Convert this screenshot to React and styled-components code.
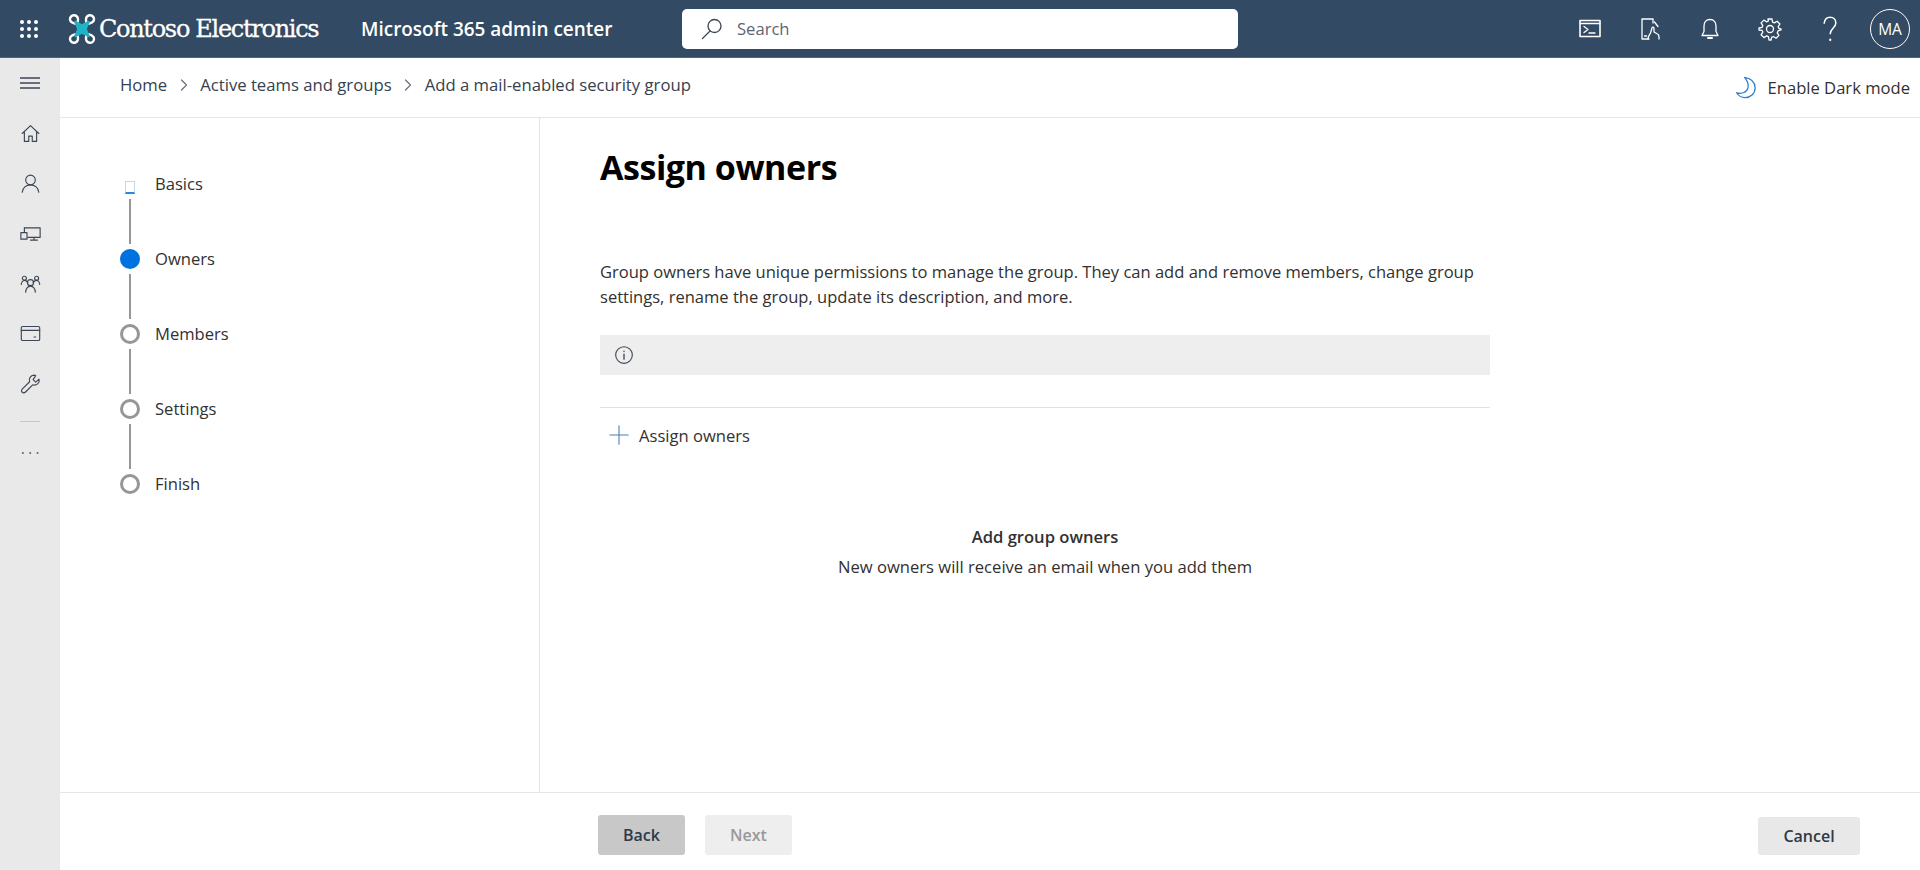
import React from 'react';
import styled, { createGlobalStyle } from 'styled-components';

const GlobalStyle = createGlobalStyle`
    html, body {
        margin: 0;
        padding: 0;
        height: 100%;
        background: #fff;
        font-family: "Open Sans", "Liberation Sans", sans-serif;
        color: #323130;
    }
    * { box-sizing: border-box; }
`;

const Page = styled.div`
    display: flex;
    flex-direction: column;
    height: 100vh;
    overflow: hidden;
`;

const TopBar = styled.header`
    display: flex;
    align-items: center;
    flex: 0 0 58px;
    background: #324a63;
    border-bottom: 1px solid #4f677c;
`;

const Waffle = styled.div`
    display: grid;
    grid-template-columns: repeat(3, 4px);
    grid-gap: 3px;
    margin-left: 20px;
    span {
        width: 4px;
        height: 4px;
        border-radius: 50%;
        background: #fff;
    }
`;

const Brand = styled.div`
    display: flex;
    align-items: center;
    margin-left: 30px;
    width: 293px;
    color: #fff;
    font-family: "DejaVu Serif", serif;
    font-size: 24px;
    letter-spacing: -1.3px;
    white-space: nowrap;
    -webkit-text-stroke: 0.3px #fff;
    svg { margin-right: 3px; }
`;

const AppName = styled.div`
    width: 321px;
    color: #fff;
    font-size: 18.95px;
    font-weight: 600;
    white-space: nowrap;
`;

const SearchBox = styled.div`
    display: flex;
    align-items: center;
    width: 556px;
    height: 40px;
    padding-left: 18px;
    background: #fff;
    border-radius: 5px;
    color: #5b6675;
    font-size: 16.6px;
    svg { margin-right: 13px; }
`;

const TopActions = styled.div`
    display: flex;
    align-items: center;
    margin-left: auto;
`;

const TopAction = styled.div`
    display: flex;
    align-items: center;
    justify-content: center;
    width: 60px;
    height: 57px;
    color: #fff;
`;

const Avatar = styled.div`
    display: flex;
    align-items: center;
    justify-content: center;
    width: 40px;
    height: 40px;
    border: 1px solid #fff;
    border-radius: 50%;
    color: #fff;
    font-size: 15.5px;
`;

const Body = styled.div`
    display: flex;
    flex: 1;
    min-height: 0;
`;

const SideNav = styled.nav`
    display: flex;
    flex-direction: column;
    align-items: center;
    flex: 0 0 60px;
    background: #e9e9e9;
    color: #3c4654;
`;

const NavItem = styled.div`
    display: flex;
    align-items: center;
    justify-content: center;
    width: 60px;
    height: 50px;
`;

const NavRule = styled.div`
    width: 20px;
    height: 1px;
    margin: 13px 0 6px;
    background: #c8c8c8;
`;

const Main = styled.main`
    display: flex;
    flex-direction: column;
    flex: 1;
    min-width: 0;
`;

const Header = styled.div`
    display: flex;
    align-items: center;
    justify-content: space-between;
    flex: 0 0 60px;
    padding: 0 10px 0 60px;
    border-bottom: 1px solid #e6e6e6;
`;

const Crumbs = styled.div`
    display: flex;
    align-items: center;
    margin-bottom: 6px;
    color: #36414f;
    font-size: 16.7px;
    svg { margin: 0 10.500px; }
`;

const DarkToggle = styled.div`
    display: flex;
    align-items: center;
    gap: 10px;
    color: #323130;
    font-size: 16.6px;
`;

const Content = styled.div`
    display: flex;
    flex: 1;
    min-height: 0;
`;

const StepPanel = styled.div`
    flex: 0 0 480px;
    padding: 56px 0 0 60px;
    border-right: 1px solid #e3e3e3;
`;

const Step = styled.div`
    display: grid;
    grid-template-columns: 20px 1fr;
    grid-column-gap: 15px;
    align-items: center;
`;

const Dot = styled.div`
    width: 20px;
    height: 20px;
    border-radius: 50%;
    border: ${({ $active }) => ($active ? '0' : '3px solid #969696')};
    background: ${({ $active }) => ($active ? '#0072df' : '#fff')};
`;

const DoneMark = styled.div`
    width: 10px;
    height: 13px;
    margin: 6px 5px 0;
    border: 1px solid #bcd9ef;
    border-bottom: 2px solid #2b88d8;
`;

const StepLabel = styled.span`
    font-size: 16.6px;
    color: #323130;
    line-height: 20px;
`;

const Connector = styled.div`
    width: 2px;
    height: 45px;
    margin: 5px 9px;
    background: #969696;
`;

const Pane = styled.section`
    width: 950px;
    padding: 29px 0 0 60px;
`;

const Title = styled.h1`
    margin: 0 0 72px;
    color: #000;
    font-size: 34px;
    font-weight: 700;
    line-height: 40px;
    letter-spacing: -0.45px;
`;

const Intro = styled.p`
    margin: 0 0 26px;
    font-size: 16.55px;
    line-height: 25px;
    color: #323130;
`;

const InfoBar = styled.div`
    display: flex;
    align-items: center;
    height: 40px;
    padding-left: 14px;
    background: #eeeeee;
    color: #3c4654;
`;

const Rule = styled.div`
    height: 1px;
    margin: 32px 0 7px;
    background: #e1e1e1;
`;

const AddRow = styled.div`
    display: flex;
    align-items: center;
    gap: 10px;
    height: 40px;
    padding-left: 9px;
    font-size: 16.6px;
`;

const EmptyState = styled.div`
    margin-top: 67px;
    text-align: center;
    font-size: 16.6px;
    line-height: 30px;
`;

const EmptyTitle = styled.div`
    font-weight: 600;
`;

const Footer = styled.footer`
    display: flex;
    align-items: center;
    flex: 0 0 78px;
    padding: 7px 60px 0 538px;
    border-top: 1px solid #e6e6e6;
`;

const Button = styled.div`
    display: flex;
    align-items: center;
    justify-content: center;
    width: ${({ $wide }) => ($wide ? '102px' : '87px')};
    height: ${({ $wide }) => ($wide ? '38px' : '40px')};
    margin-left: ${({ $wide, $next }) => ($wide ? 'auto' : $next ? '20px' : '0')};
    margin-top: ${({ $wide }) => ($wide ? '2px' : '0')};
    border-radius: 3px;
    background: ${({ $kind }) => ({ back: '#c8c8c8', next: '#eeeeee', cancel: '#e8e8e8' })[$kind]};
    color: ${({ $kind }) => ($kind === 'next' ? '#989898' : '#2e3a48')};
    font-size: 16px;
    font-weight: 600;
`;

const Icon = ({ size = 24, box = 24, children, ...rest }) => (
    <svg width={size} height={size} viewBox={`0 0 ${box} ${box}`} fill="none" stroke="currentColor" strokeWidth="1.3" strokeLinecap="round" strokeLinejoin="round" {...rest}>
        {children}
    </svg>
);

const Chevron = () => (
    <Icon size={12} box={12} color="#6b7480"><path d="M3.5 1 8.5 6 3.5 11" /></Icon>
);

const Logo = () => (
    <svg width="28" height="30" viewBox="0 0 28 30" fill="none">
        <g stroke="#fff" strokeWidth="2.4" fill="none">
            <path d="M10 10C5 10 2 7.500 2 5.500A4 4 0 0 1 10 5C10 7 9.500 8 10 10Z" />
            <path d="M18 10C23 10 26 7.500 26 5.500A4 4 0 0 0 18 5C18 7 18.500 8 18 10Z" />
            <path d="M10 20C5 20 2 22.500 2 24.500A4 4 0 0 0 10 25C10 23 9.500 22 10 20Z" />
            <path d="M18 20C23 20 26 22.500 26 24.500A4 4 0 0 1 18 25C18 23 18.500 22 18 20Z" />
        </g>
        <path d="M7.500 8 14 11.500 20.500 8 17.500 15 20.500 22 14 18.500 7.500 22 10.500 15Z" fill="#1fb3c8" stroke="#1fb3c8" strokeWidth="2.5" strokeLinejoin="round" />
    </svg>
);

const navIcons = [
    <path key="home" d="M2.500 12 12 3l9.500 9M5 10v11h5v-6h4v6h5V10" />,
    <g key="user"><circle cx="12" cy="8" r="5.500" /><path d="M2.500 22c.5-5 4.500-8.500 9.500-8.500s9 3.500 9.500 8.500" /></g>,
    <g key="devices"><path d="M5 5.500h18v11H9" /><path d="M5 5.500v5M16 16.500v3M12 19.500h8" /><rect x="1" y="11" width="7" height="7.500" /></g>,
    <g key="group"><circle cx="12" cy="11" r="3.500" /><circle cx="5" cy="6" r="2.300" /><circle cx="19" cy="6" r="2.300" /><path d="M6.500 22c0-4 2.500-7 5.500-7s5.500 3 5.500 7M1.500 13c0-2 1.500-4.500 3.500-4.500 1.500 0 2.500.5 4 2.500M22.500 13c0-2-1.500-4.500-3.500-4.500-1.500 0-2.500.5-4 2.500" /></g>,
    <g key="card"><rect x="1.500" y="4" width="21" height="16" rx="1.500" /><path d="M1.500 8.500h21M16 16h2" /></g>,
    <path key="tool" d="M16 2.500a5.500 5.500 0 0 0-5 7.500L2.500 18.500a2.400 2.400 0 0 0 3.500 3.500L14.500 13.500A5.500 5.500 0 0 0 21.800 7l-3.800 3.500-3-3L18 3a5.500 5.500 0 0 0-2-.5Z" />,
];

const steps = ['Basics', 'Owners', 'Members', 'Settings', 'Finish'];

const App = () => (
    <Page>
        <GlobalStyle />
        <TopBar>
            <Waffle>
                {Array.from({ length: 9 }, (_, i) => <span key={i} />)}
            </Waffle>
            <Brand><Logo />Contoso Electronics</Brand>
            <AppName>Microsoft 365 admin center</AppName>
            <SearchBox>
                <Icon color="#3c4654"><circle cx="14.500" cy="9" r="6.500" /><path d="M10 14 2.500 21.500" /></Icon>
                Search
            </SearchBox>
            <TopActions>
                <TopAction>
                    <Icon>
                        <rect x="2" y="3.500" width="20" height="16" strokeWidth="1.600" />
                        <path d="M2 6.500h20M6 9.500l4 3-4 3M11 16h6" />
                    </Icon>
                </TopAction>
                <TopAction>
                    <Icon>
                        <path d="M11 22H4V2h11v4" />
                        <path d="M10 22c0-3 1.500-4 2.500-6l1.500-5c.5-1.500 2-1 2 .5v3.500l3.500 2c1 .5 1.500 1.500 1.500 3V22" />
                        <path d="M16.500 5l3.500 4.500M6.500 19h2" />
                    </Icon>
                </TopAction>
                <TopAction>
                    <Icon>
                        <path d="M12 2.500c-4 0-6 3-6 6.500v5.500L4 18.500h16l-2-4V9c0-3.500-2-6.500-6-6.500Z" />
                        <path d="M10 21h4" strokeWidth="2" />
                    </Icon>
                </TopAction>
                <TopAction>
                    <Icon>
                        <circle cx="12" cy="12" r="3.500" />
                        <path d="M10 2h4l.6 3.100 1.800.8 2.700-1.700 2.800 2.800-1.700 2.700.8 1.800L23 12v1l-3 .9-.8 1.800 1.700 2.700-2.800 2.800-2.700-1.700-1.800.8L13 23h-2l-.6-3.300-1.800-.8-2.700 1.700-2.800-2.800 1.700-2.700-.8-1.800L1 13v-2l3-.6.800-1.800-1.700-2.700 2.800-2.800 2.700 1.700 1.800-.8Z" />
                    </Icon>
                </TopAction>
                <TopAction>
                    <Icon size={28}>
                        <path d="M7 7c.5-3 2.500-5 5-5 3 0 5 2 5 4.800 0 4-4.500 4.700-4.800 9.200" />
                        <path d="M12.200 21v.5" strokeWidth="1.800" />
                    </Icon>
                </TopAction>
                <TopAction><Avatar>MA</Avatar></TopAction>
            </TopActions>
        </TopBar>
        <Body>
            <SideNav>
                <NavItem>
                    <Icon size={20} box={20}><path d="M0 5h20M0 10h20M0 15h20" /></Icon>
                </NavItem>
                {navIcons.map((icon, i) => (
                    <NavItem key={i}><Icon size={21}>{icon}</Icon></NavItem>
                ))}
                <NavRule />
                <NavItem>
                    <Icon size={22}>
                        <path d="M4 12h.5M12 12h.5M20 12h.5" strokeWidth="1.800" />
                    </Icon>
                </NavItem>
            </SideNav>
            <Main>
                <Header>
                    <Crumbs>
                        Home<Chevron />Active teams and groups<Chevron />Add a mail-enabled security group
                    </Crumbs>
                    <DarkToggle>
                        <Icon size={23} color="#2b7cd3">
                            <path d="M10 1.500c6 1 11 4.500 11 11 0 6-5 10-10.500 10-4 0-7-2-9-5 6 1.500 11-.5 12-5 1-4-1-8-3.500-11Z" />
                        </Icon>
                        Enable Dark mode
                    </DarkToggle>
                </Header>
                <Content>
                    <StepPanel>
                        {steps.map((step, i) => (
                            <React.Fragment key={step}>
                                <Step>
                                    {i === 0 ? <DoneMark /> : <Dot $active={i === 1} />}
                                    <StepLabel>{step}</StepLabel>
                                </Step>
                                {i < steps.length - 1 && <Connector />}
                            </React.Fragment>
                        ))}
                    </StepPanel>
                    <Pane>
                        <Title>Assign owners</Title>
                        <Intro>
                            Group owners have unique permissions to manage the group. They can add and remove members, change group settings, rename the group, update its description, and more.
                        </Intro>
                        <InfoBar>
                            <Icon size={20}>
                                <circle cx="12" cy="12" r="10" />
                                <path d="M12 11v6M12 7.500v.3" strokeWidth="1.600" />
                            </Icon>
                        </InfoBar>
                        <Rule />
                        <AddRow>
                            <Icon size={20} color="#4a7fb5"><path d="M12 1v22M1 12h22" /></Icon>
                            Assign owners
                        </AddRow>
                        <EmptyState>
                            <EmptyTitle>Add group owners</EmptyTitle>
                            New owners will receive an email when you add them
                        </EmptyState>
                    </Pane>
                </Content>
                <Footer>
                    <Button $kind="back">Back</Button>
                    <Button $kind="next" $next>Next</Button>
                    <Button $kind="cancel" $wide>Cancel</Button>
                </Footer>
            </Main>
        </Body>
    </Page>
);

export default App;
